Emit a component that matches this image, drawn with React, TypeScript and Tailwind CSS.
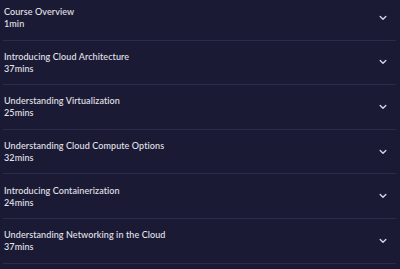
import React from 'react';

const lessons = [
    { title: 'Course Overview', duration: '1min' },
    { title: 'Introducing Cloud Architecture', duration: '37mins' },
    { title: 'Understanding Virtualization', duration: '25mins' },
    { title: 'Understanding Cloud Compute Options', duration: '32mins' },
    { title: 'Introducing Containerization', duration: '24mins' },
    { title: 'Understanding Networking in the Cloud', duration: '37mins' },
];

const Chevron: React.FC = () => (
    <svg width="8" height="6" viewBox="0 0 8 6" fill="none" className="shrink-0">
        <path d="M1.2 1.5 L4 4.3 L6.8 1.5" stroke="#d4d3e2" strokeWidth="1.4" strokeLinecap="round" strokeLinejoin="round" />
    </svg>
);

export default function App() {
    return (
        <div className="w-[400px] h-[269px] overflow-hidden bg-[#1b1a34] font-['Lato',sans-serif]">
            <div className="-mt-[5px] ml-[3px] mr-[4px] border-t border-[#2c2b4a]">
                {lessons.map((l) => (
                    <div key={l.title} className="h-[44.6px] flex items-center justify-between border-b border-[#2c2b4a] pl-[1px] pr-[9px]">
                        <div className="flex flex-col pt-[1px]">
                            <span className="text-[9px] leading-[12px] font-medium tracking-[0.1px] text-[#e4e4ec]">{l.title}</span>
                            <span className="text-[9px] leading-[12px] font-medium tracking-[0.1px] text-[#e4e4ec]">{l.duration}</span>
                        </div>
                        <Chevron />
                    </div>
                ))}
            </div>
        </div>
    );
}
